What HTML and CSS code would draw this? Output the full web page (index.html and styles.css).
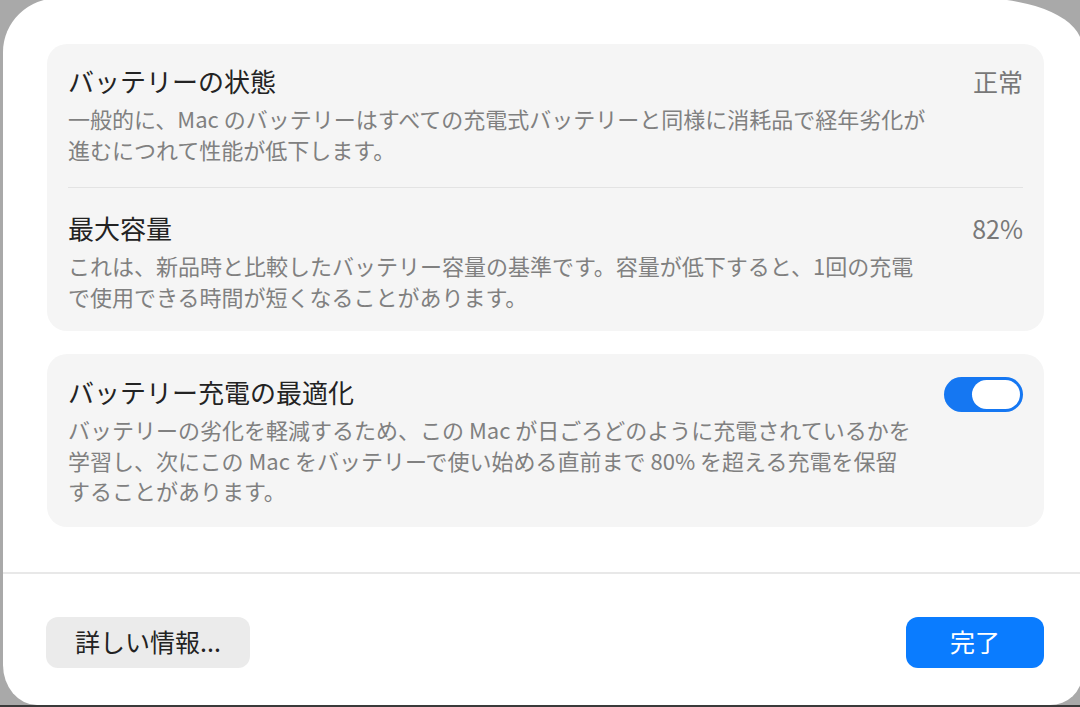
FILE: index.html
```html
<!DOCTYPE html>
<html lang="ja">
<head>
<meta charset="utf-8">
<title>バッテリーの状態</title>
<link rel="stylesheet" href="styles.css">
</head>
<body>
<div class="window">
  <div class="content">
    <section class="card">
      <div class="row row-first">
        <div class="text">
          <div class="title">バッテリーの状態</div>
          <div class="desc">一般的に、Mac のバッテリーはすべての充電式バッテリーと同様に消耗品で経年劣化が<br>進むにつれて性能が低下します。</div>
        </div>
        <div class="value">正常</div>
      </div>
      <div class="sep"></div>
      <div class="row row-second">
        <div class="text">
          <div class="title">最大容量</div>
          <div class="desc">これは、新品時と比較したバッテリー容量の基準です。容量が低下すると、1回の充電<br>で使用できる時間が短くなることがあります。</div>
        </div>
        <div class="value">82%</div>
      </div>
    </section>
    <section class="card card-second">
      <div class="row row-toggle">
        <div class="text">
          <div class="title">バッテリー充電の最適化</div>
          <div class="desc">バッテリーの劣化を軽減するため、この Mac が日ごろどのように充電されているかを<br>学習し、次にこの Mac をバッテリーで使い始める直前まで 80% を超える充電を保留<br>することがあります。</div>
        </div>
        <div class="toggle"><div class="knob"></div></div>
      </div>
    </section>
  </div>
  <div class="divider"></div>
  <div class="footer">
    <button class="btn btn-secondary">詳しい情報...</button>
    <button class="btn btn-primary">完了</button>
  </div>
</div>
</body>
</html>
```

FILE: styles.css
```css
html, body {
  margin: 0;
  padding: 0;
}
body {
  width: 1080px;
  height: 707px;
  overflow: hidden;
  background: linear-gradient(to bottom, #a9a9a9 0, #a9a9a9 705px, #3a3a3a 705px);
  font-family: "Noto Sans CJK JP", "Noto Sans", sans-serif;
}
.window {
  box-sizing: border-box;
  width: 1079px;
  height: 707px;
  margin: -2px 0 0 3px;
  background: #ffffff;
  border-top-left-radius: 56px 54px;
  border-top-right-radius: 105px 48px;
  border-bottom-left-radius: 34px 40px;
  border-bottom-right-radius: 32px 30px;
  display: flex;
  flex-direction: column;
}
.content {
  padding: 46px 38px 0 44px;
  display: flex;
  flex-direction: column;
  gap: 23px;
}
.card {
  background: #f5f5f5;
  border-radius: 20px;
  padding: 0 21px;
}
.row {
  display: flex;
  justify-content: space-between;
  align-items: flex-start;
}
.row-first { padding: 20px 0 23px; }
.row-second { padding: 23px 0 20px; }
.row-toggle { padding: 21px 0 21px; }
.title {
  font-size: 26px;
  line-height: 34px;
  color: #232323;
}
.desc {
  margin-top: 5px;
  font-size: 22px;
  line-height: 30.5px;
  color: #808080;
  white-space: nowrap;
}
.value {
  font-size: 25px;
  line-height: 34px;
  color: #787878;
}
.sep {
  height: 1px;
  background: #e3e3e3;
}
.toggle {
  box-sizing: border-box;
  margin-top: 2px;
  width: 79px;
  height: 35px;
  border-radius: 18px;
  background: #1577f2;
  padding: 3px 3px 0 0;
  display: flex;
  justify-content: flex-end;
}
.knob {
  width: 48px;
  height: 29px;
  border-radius: 15px;
  background: #ffffff;
}
.divider {
  margin-top: 45px;
  height: 2px;
  background: #e8e8e8;
}
.footer {
  padding: 43px 38px 0 43px;
  display: flex;
  justify-content: space-between;
}
.btn {
  height: 51px;
  border: none;
  border-radius: 12px;
  font-family: "Noto Sans CJK JP", "Noto Sans", sans-serif;
  font-size: 25px;
  padding: 0 0 2px;
}
.btn-secondary {
  width: 204px;
  background: #ebebeb;
  color: #222222;
}
.btn-primary {
  width: 138px;
  background: #0a7cff;
  color: #ffffff;
}
```
